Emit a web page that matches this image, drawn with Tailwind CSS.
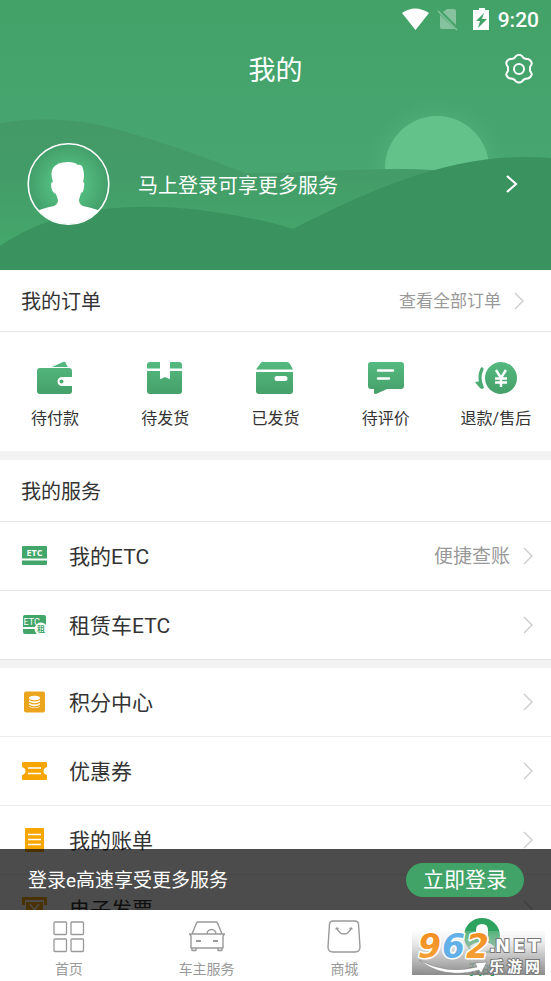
<!DOCTYPE html>
<html lang="zh-CN">
<head>
<meta charset="utf-8">
<meta name="viewport" content="width=device-width, initial-scale=1">
<title>我的</title>
<script src="https://cdn.jsdelivr.net/npm/@tailwindcss/browser@4"></script>
</head>
<body class="bg-white font-['Roboto','Noto_Sans_CJK_SC',sans-serif] text-[#333]">
<div class="relative flex h-screen flex-col overflow-hidden">
  <main class="min-h-0 flex-1 overflow-hidden">
    <header class="relative flex h-[270px] flex-col bg-[#44a368] text-white">
      <svg class="absolute inset-0 h-full w-full" viewBox="0 0 551 270" preserveAspectRatio="none" aria-hidden="true">
        <defs>
          <linearGradient id="sky" x1="0" y1="0" x2="0" y2="1"><stop offset="0" stop-color="#43a268"/><stop offset=".6" stop-color="#47a670"/><stop offset="1" stop-color="#47a670"/></linearGradient>
          <linearGradient id="hill" x1="0" y1="120" x2="0" y2="240" gradientUnits="userSpaceOnUse"><stop offset="0" stop-color="#449a67"/><stop offset=".4" stop-color="#439b67"/><stop offset="1" stop-color="#44a66b"/></linearGradient>
          <radialGradient id="glow"><stop offset=".6" stop-color="#5ab981" stop-opacity=".4"/><stop offset="1" stop-color="#47a670" stop-opacity="0"/></radialGradient>
        </defs>
        <rect width="551" height="270" fill="url(#sky)"/>
        <circle cx="437" cy="168" r="78" fill="url(#glow)"/>
        <circle cx="437" cy="168" r="52" fill="#62c28a"/>
        <path d="M0 123Q60 113 120 130Q180 147 245 173C290 174 340 169 400 169Q430 169 470 173V270H0Z" fill="url(#hill)"/>
        <path d="M0 246C60 205 150 193 280 225L293 229C390 180 465 151 551 158V270H0Z" fill="#3a925e"/>
      </svg>
      <div class="relative flex h-10 items-center justify-end pr-3">
        <svg class="h-10 w-[88px]" viewBox="0 0 88 40" fill="#fff" aria-hidden="true">
          <path d="M0 13Q13 4 27 13L13.500 30Z"/>
          <g opacity=".35"><path d="M45 9H52Q54 9 54 11V25L41 12ZM38 15 53 29H40Q38 29 38 27Z"/><path d="M36 11 55 30" stroke="#fff" stroke-width="1.500"/></g>
          <path d="M74 10h3V8h6v2h4v20H71V10Zm8 3-8 8h4l-2 7 9-9h-5z" fill-rule="evenodd"/>
        </svg>
        <span class="pl-2 text-[21px] font-medium leading-10">9:20</span>
      </div>
      <div class="relative flex h-[58px] items-center justify-center">
        <h1 class="pt-[3px] text-[27px] leading-10">我的</h1>
        <button aria-label="设置" class="absolute right-4 top-3">
          <svg class="size-8" viewBox="0 0 32 32" fill="none" stroke="#fff" stroke-width="2" stroke-linejoin="round"><path d="M13 4Q16 1.500 19 4Q21 7.500 25 7Q28 8 28.800 11Q28.800 12.500 27 15V19Q28.800 21 28.800 22.500Q28 25.500 25 26.500Q21 26 19 29.500Q16 31.500 13 29.500Q11 26 7 26.500Q4 25.500 3.200 22.500Q3.200 21 5 19V15Q3.200 12.500 3.200 11Q4 8 7 7Q11 7.500 13 4Z"/><circle cx="16" cy="17" r="5"/></svg>
        </button>
      </div>
      <a href="#login" class="relative mt-11 flex items-center pl-[27px] pr-[33px]">
        <svg class="size-[84px]" viewBox="0 0 84 84" aria-hidden="true">
          <defs><radialGradient id="av"><stop offset="0" stop-color="#55c284"/><stop offset=".5" stop-color="#50b87c"/><stop offset="1" stop-color="#439e69"/></radialGradient><clipPath id="ac"><circle cx="41.500" cy="42" r="40"/></clipPath></defs>
          <circle cx="41.500" cy="42" r="40" fill="url(#av)"/>
          <path clip-path="url(#ac)" fill="#fff" d="M0 84V73Q16 66 27 64Q31 62 31 58L29 52Q24 50 24 42Q24 40 26 40Q23 31 26 26Q30 20 41 20Q48 20 51 23Q55 22 56 27Q58 33 56 40Q58 40 57 44Q57 50 54 51L52 58Q52 62 56 64Q67 66 84 73V84Z"/>
          <circle cx="41.500" cy="42" r="40.300" fill="none" stroke="#fff" stroke-width="1.600"/>
        </svg>
        <span class="flex-1 pl-[27px] pt-[3px] text-[20px]">马上登录可享更多服务</span>
        <svg class="h-5 w-3" viewBox="0 0 12 20" fill="none" stroke="#fff" stroke-width="2.200" aria-hidden="true"><path d="M1 2l9 8-9 8"/></svg>
      </a>
    </header>

    <section>
      <div class="flex h-[62px] items-center justify-between border-b border-[#e5e5e5] pl-[21px] pr-[26px]">
        <h2 class="pt-[2px] text-[20px]">我的订单</h2>
        <a href="#orders" class="flex items-center gap-3 text-[17px] text-[#999]"><span class="pt-[2px]">查看全部订单</span>
          <svg class="h-5 w-3" viewBox="0 0 12 20" fill="none" stroke="#ccc" stroke-width="1.400" aria-hidden="true"><path d="M2 2l8 8-8 8"/></svg></a>
      </div>
      <svg class="absolute size-0" aria-hidden="true"><defs><linearGradient id="g" x1="0" y1="0" x2="0" y2="36" gradientUnits="userSpaceOnUse"><stop offset="0" stop-color="#55bb81"/><stop offset="1" stop-color="#449e68"/></linearGradient></defs></svg>
      <nav aria-label="订单" class="grid h-[119px] grid-cols-5 pt-7 text-center text-[16px] leading-6">
        <a href="#pay" class="flex flex-col items-center gap-[11px]"><svg class="h-9 w-11" viewBox="0 0 44 36" aria-hidden="true"><path fill="url(#g)" d="M19 7 30 2Q33 1 33 4L35 7ZM7 8H36Q39 8 39 11V17H29a4.500 4.500 0 0 0 0 9H39V31Q39 34 36 34H7Q4 34 4 31V11Q4 8 7 8Z"/><circle cx="28.500" cy="21.500" r="2" fill="#4bab72"/></svg>待付款</a>
        <a href="#ship" class="flex flex-col items-center gap-[11px]"><svg class="h-9 w-11" viewBox="0 0 44 36" aria-hidden="true"><path fill="url(#g)" d="M7 2H17V8.500H4V5Q4 2 7 2ZM27 2H36Q39 2 39 5V8.500H27ZM4 11H17V19L19 18.500Q22 16 25 18.500L27 19V11H39V31Q39 34 36 34H7Q4 34 4 31Z"/></svg>待发货</a>
        <a href="#sent" class="flex flex-col items-center gap-[11px]"><svg class="h-9 w-11" viewBox="0 0 44 36" aria-hidden="true"><path fill="url(#g)" fill-rule="evenodd" d="M9 2H34Q36 2 37 4L40 9.500H3L7 4Q8 2 9 2ZM3 12H40V31Q40 34 37 34H6Q3 34 3 31ZM24 16a2.500 2.500 0 0 0 0 5H32a2.500 2.500 0 0 0 0-5Z"/></svg>已发货</a>
        <a href="#review" class="flex flex-col items-center gap-[11px]"><svg class="h-9 w-11" viewBox="0 0 44 36" aria-hidden="true"><path fill="url(#g)" d="M7 2H37Q40 2 40 5V26Q40 29 37 29H23L12 34Q10 34 10 33V29H7Q4 29 4 26V5Q4 2 7 2Z"/><path d="M14 10.500H29M14 18.500H25" stroke="#fff" stroke-width="2.400" stroke-linecap="round"/></svg>待评价</a>
        <a href="#refund" class="flex flex-col items-center gap-[11px]"><svg class="h-9 w-11" viewBox="0 0 44 36" aria-hidden="true"><circle cx="27" cy="18" r="16" fill="url(#g)"/><path d="M8 9Q4 17 8 27" fill="none" stroke="#4bab72" stroke-width="3.200" stroke-linecap="round"/><path d="M1 22 7 21 10 28Q7 30 5 27Z" fill="#4bab72"/><path d="M22 10l5 8 5-8M21 18.500H33M21 22.500H33M27 18V27" fill="none" stroke="#fff" stroke-width="2.500"/></svg>退款/售后</a>
      </nav>
    </section>

    <section class="border-t-[9px] border-[#f2f2f2]">
      <h2 class="flex h-[62px] items-center border-b border-[#e5e5e5] pl-[21px] pt-[2px] text-[20px]">我的服务</h2>
      <a href="#etc" class="flex h-[69px] items-center border-b border-[#e5e5e5] pl-[21px] pr-[17px]">
        <svg class="h-7 w-[27px]" viewBox="0 0 27 28" aria-hidden="true"><path fill="#42a66a" d="M2 4H25Q26 4 26 5V16.500H1V5Q1 4 2 4ZM1 18.500H26V22Q26 23 25 23H2Q1 23 1 22Z"/><text x="13.500" y="14" text-anchor="middle" font-size="9" font-weight="700" fill="#fff" font-family="Open Sans">ETC</text></svg>
        <span class="flex-1 pl-[21px] pt-[3px] text-[21px]">我的ETC</span><span class="pr-3 pt-[3px] text-[19px] text-[#999]">便捷查账</span>
        <svg class="h-5 w-3" viewBox="0 0 12 20" fill="none" stroke="#ccc" stroke-width="1.400" aria-hidden="true"><path d="M2 2l8 8-8 8"/></svg>
      </a>
      <a href="#rental" class="flex h-[69px] items-center border-b border-[#e5e5e5] pl-[21px] pr-[17px]">
        <svg class="h-7 w-[27px]" viewBox="0 0 27 28" aria-hidden="true"><path fill="#42a66a" d="M4 4H23Q25 4 25 6V16H2V6Q2 4 4 4ZM2 18H25V21Q25 23 23 23H4Q2 23 2 21Z"/><text x="2.500" y="14" font-size="9" fill="#fff" font-family="Roboto">ETC</text><circle cx="20" cy="18" r="6.500" fill="#fff"/><text x="20" y="21" text-anchor="middle" font-size="8" font-weight="700" fill="#42a66a" font-family="Noto Sans CJK SC">租</text></svg>
        <span class="flex-1 pl-[21px] pt-[3px] text-[21px]">租赁车ETC</span>
        <svg class="h-5 w-3" viewBox="0 0 12 20" fill="none" stroke="#ccc" stroke-width="1.400" aria-hidden="true"><path d="M2 2l8 8-8 8"/></svg>
      </a>
    </section>

    <section class="border-t-8 border-[#f2f2f2]">
      <a href="#points" class="flex h-[69px] items-center border-b border-[#ededed] pl-[21px] pr-[17px]">
        <svg class="h-7 w-[27px]" viewBox="0 0 27 28" aria-hidden="true"><rect x="3" y="3.500" width="21" height="21" rx="2" fill="#eba51c"/><path fill="#fff" d="M8 10C8 7 19 7 19 10C19 13 8 13 8 10ZM8 12Q13.500 15 19 12V13.500Q13.500 17 8 13.500ZM8 15Q13.500 18 19 15V16.500Q13.500 20 8 16.500ZM8 18Q13.500 21 19 18C19 20.700 8 20.700 8 18Z"/></svg>
        <span class="flex-1 pl-[21px] pt-[3px] text-[21px]">积分中心</span>
        <svg class="h-5 w-3" viewBox="0 0 12 20" fill="none" stroke="#ccc" stroke-width="1.400" aria-hidden="true"><path d="M2 2l8 8-8 8"/></svg>
      </a>
      <a href="#coupons" class="flex h-[69px] items-center border-b border-[#ededed] pl-[21px] pr-[17px]">
        <svg class="h-7 w-[27px]" viewBox="0 0 27 28" aria-hidden="true"><path fill="#f7a600" d="M2 5H25Q26 5 26 6V10Q22.500 11 22.500 14T26 18V22Q26 23 25 23H2Q1 23 1 22V18Q4.500 17 4.500 14T1 10V6Q1 5 2 5Z"/><path d="M7 11H20M7 16.500H20" stroke="#fff" stroke-width="1.700"/></svg>
        <span class="flex-1 pl-[21px] pt-[3px] text-[21px]">优惠券</span>
        <svg class="h-5 w-3" viewBox="0 0 12 20" fill="none" stroke="#ccc" stroke-width="1.400" aria-hidden="true"><path d="M2 2l8 8-8 8"/></svg>
      </a>
      <a href="#bills" class="flex h-[69px] items-center border-b border-[#ededed] pl-[21px] pr-[17px]">
        <svg class="h-7 w-[27px]" viewBox="0 0 27 28" aria-hidden="true"><rect x="4" y="2" width="19" height="24" rx="1" fill="#f7a600"/><path d="M7 8.500H20M7 13.500H20M7 18.500H20" stroke="#fff" stroke-width="1.400"/></svg>
        <span class="flex-1 pl-[21px] pt-[3px] text-[21px]">我的账单</span>
        <svg class="h-5 w-3" viewBox="0 0 12 20" fill="none" stroke="#ccc" stroke-width="1.400" aria-hidden="true"><path d="M2 2l8 8-8 8"/></svg>
      </a>
      <a href="#invoices" class="flex h-[69px] items-center border-b border-[#ededed] pl-[21px] pr-[17px]">
        <svg class="h-7 w-[27px]" viewBox="0 0 27 28" aria-hidden="true"><path fill="#f7a600" d="M1 2H26V10H23V5H4V10H1ZM5 7H22V26H5Z"/><path d="M9 9l4.500 6L18 9M9 16H18M13.500 15V22" stroke="#fff" stroke-width="1.400" fill="none"/></svg>
        <span class="flex-1 pl-[21px] pt-[3px] text-[21px]">电子发票</span>
        <svg class="h-5 w-3" viewBox="0 0 12 20" fill="none" stroke="#ccc" stroke-width="1.400" aria-hidden="true"><path d="M2 2l8 8-8 8"/></svg>
      </a>
    </section>
  </main>

  <div class="relative h-[71px] shrink-0 bg-white">
    <aside class="absolute inset-x-0 bottom-full flex h-[61px] items-center justify-between bg-black/70 pl-7 pr-[27px] text-white">
      <p class="pt-[3px] text-[19px]">登录e高速享受更多服务</p>
      <button class="h-[34px] w-[118px] rounded-full bg-[#42a368] text-[21px] leading-[34px]">立即登录</button>
    </aside>
    <nav aria-label="主导航" class="grid h-full grid-cols-4 pt-2 text-[14px] leading-5 text-[#999]">
      <a href="#home" class="flex flex-col items-center gap-[5px]"><svg class="size-9" viewBox="0 0 36 36" fill="none" stroke="#999" stroke-width="1.300" aria-hidden="true"><rect x="3" y="4" width="12.500" height="12.500" rx="1"/><rect x="20" y="4" width="12.500" height="12.500" rx="1"/><rect x="3" y="21" width="12.500" height="12.500" rx="1"/><rect x="20" y="21" width="12.500" height="12.500" rx="1"/></svg>首页</a>
      <a href="#car" class="flex flex-col items-center gap-[5px]"><svg class="size-9" viewBox="0 0 36 36" fill="none" stroke="#999" stroke-width="1.400" stroke-linejoin="round" aria-hidden="true"><path d="M3 16 7.500 5Q8 4 9 4H27Q28 4 28.500 5L33 16M0 16H36M1 16.500 2 18V30H34V18L35 16.500M3 30v2.500H7V30M29 30v2.500H33V30M18 16a4.500 4.500 0 0 1 9 0"/><path d="M7 23H12M24 23H29" stroke-width="2"/></svg>车主服务</a>
      <a href="#mall" class="flex flex-col items-center gap-[5px]"><svg class="size-9" viewBox="0 0 36 36" fill="none" stroke="#999" stroke-width="1.400" stroke-linecap="round" aria-hidden="true"><path d="M7 3H29Q32 3 32.500 6L34 29Q34 34 29 34H7Q2 34 2 29L3.500 6Q4 3 7 3Z"/><path d="M11 10Q13 16 18 16T25 10M10 11l1-1 1 .5M24 10.500l1-.5 1 1"/></svg>商城</a>
      <a href="#me" aria-current="page" class="flex flex-col items-center gap-[5px] text-[#249c5b]"><svg class="size-9" viewBox="0 0 36 36" aria-hidden="true"><circle cx="18" cy="18" r="18" fill="#2ea35f"/><path fill="#fff" d="M12 12Q12 6 18 6T24 12V17Q24 20 21 22V24Q27 25 31 29Q18 39 5 29Q9 25 15 24V22Q12 20 12 17Z"/></svg>我的</a>
    </nav>
    <svg class="absolute bottom-1.5 right-[6px] h-[46px] w-[133px]" viewBox="0 0 133 46" role="img" aria-label="962.NET 乐游网">
      <defs><linearGradient id="wm" x1="0" y1="0" x2="0" y2="1"><stop offset="0" stop-color="#eee" stop-opacity=".2"/><stop offset=".5" stop-color="#bbb" stop-opacity=".75"/><stop offset="1" stop-color="#777" stop-opacity=".85"/></linearGradient>
      <linearGradient id="or" x1="0" y1="0" x2="0" y2="1"><stop offset="0" stop-color="#f08a1c"/><stop offset="1" stop-color="#f9a63c"/></linearGradient></defs>
      <rect y="2" width="133" height="44" fill="url(#wm)"/>
      <path d="M7 31Q35 46 65 38L63 34L75 33L69 44L67 41Q32 51 7 31Z" fill="#fff" stroke="#888" stroke-width=".6"/>
      <g font-family="DejaVu Sans" font-weight="700" font-style="italic" font-size="33" paint-order="stroke" stroke="#fff" stroke-width="3" stroke-linejoin="round"><text x="6" y="29" fill="url(#or)">9</text><text x="30" y="29" fill="#62b0e8">6</text><text x="54" y="29" fill="url(#or)">2</text></g>
      <g fill="#fff" stroke="#777" stroke-width="2" paint-order="stroke" font-weight="700"><text y="23" font-family="DejaVu Sans" font-size="18"><tspan x="77">.</tspan><tspan x="83">N</tspan><tspan x="101">E</tspan><tspan x="116">T</tspan></text><text y="43" font-family="Noto Sans CJK SC" font-size="15"><tspan x="77">乐</tspan><tspan x="95">游</tspan><tspan x="113">网</tspan></text></g>
    </svg>
  </div>
</div>
</body>
</html>
